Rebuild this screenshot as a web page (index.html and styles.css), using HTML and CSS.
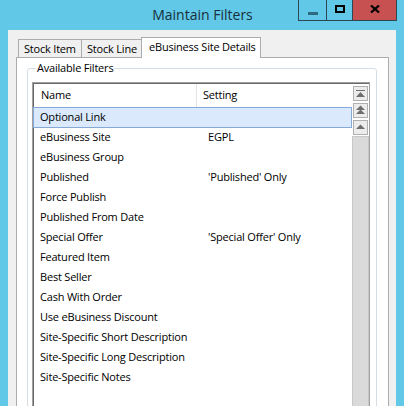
FILE: index.html
```html
<!DOCTYPE html>
<html>
<head>
<meta charset="utf-8">
<link rel="stylesheet" href="styles.css">
</head>
<body>
<div class="window">
  <div class="titlebar">
    <div class="title">Maintain Filters</div>
    <div class="controls">
      <div class="wbtn min"><span class="dash"></span></div>
      <div class="wbtn max"><span class="box"></span></div>
      <div class="wbtn close">
        <svg width="10" height="8" viewBox="0 0 10 8"><path d="M1 0.5 L9 7.5 M9 0.5 L1 7.5" stroke="#000" stroke-width="2.2" fill="none"/></svg>
      </div>
    </div>
  </div>
  <div class="client">
    <div class="tabs">
      <div class="tab t1">Stock Item</div>
      <div class="tab t2">Stock Line</div>
      <div class="tab active">eBusiness Site Details</div>
    </div>
    <div class="panel">
      <fieldset class="group">
        <legend>Available Filters</legend>
        <div class="list">
          <div class="items">
            <div class="header">
              <div class="hcol hname">Name</div>
              <div class="hcol hset">Setting</div>
            </div>
            <div class="row selected"><span>Optional Link</span><span></span></div>
            <div class="row"><span>eBusiness Site</span><span>EGPL</span></div>
            <div class="row"><span>eBusiness Group</span><span></span></div>
            <div class="row"><span>Published</span><span>'Published' Only</span></div>
            <div class="row"><span>Force Publish</span><span></span></div>
            <div class="row"><span>Published From Date</span><span></span></div>
            <div class="row"><span>Special Offer</span><span>'Special Offer' Only</span></div>
            <div class="row"><span>Featured Item</span><span></span></div>
            <div class="row"><span>Best Seller</span><span></span></div>
            <div class="row"><span>Cash With Order</span><span></span></div>
            <div class="row"><span>Use eBusiness Discount</span><span></span></div>
            <div class="row"><span>Site-Specific Short Description</span><span></span></div>
            <div class="row"><span>Site-Specific Long Description</span><span></span></div>
            <div class="row"><span>Site-Specific Notes</span><span></span></div>
          </div>
          <div class="scrollbar">
            <div class="sbtn"><svg width="13" height="13" viewBox="0 0 13 13"><rect x="2" y="3" width="9" height="1" fill="#6e6e6e"/><polygon points="6.5,5 11,10 2,10" fill="#6e6e6e"/></svg></div>
            <div class="sbtn"><svg width="13" height="13" viewBox="0 0 13 13"><polygon points="6.5,1.5 11,6 2,6" fill="#6e6e6e"/><polygon points="6.5,5.5 11,10 2,10" fill="#6e6e6e"/></svg></div>
            <div class="sbtn"><svg width="13" height="13" viewBox="0 0 13 13"><polygon points="6.5,3.5 11,8 2,8" fill="#6e6e6e"/></svg></div>
            <div class="track"></div>
          </div>
        </div>
      </fieldset>
    </div>
  </div>
</div>
</body>
</html>
```
FILE: styles.css
```css
html, body {
  margin: 0;
  padding: 0;
}
body {
  width: 404px;
  height: 406px;
  overflow: hidden;
  background: #62c8e8;
  font-family: "Open Sans", "Noto Sans", sans-serif;
  font-size: 11px;
  letter-spacing: -0.2px;
  color: #000;
}
.window {
  height: 430px;
  display: flex;
  flex-direction: column;
}
.titlebar {
  height: 30px;
  flex: none;
  display: grid;
}
.title {
  grid-area: 1 / 1;
  justify-self: center;
  align-self: center;
  font-size: 14px;
  letter-spacing: 0;
  color: #17303a;
  margin-left: 1px;
  margin-top: -1px;
}
.controls {
  grid-area: 1 / 1;
  justify-self: end;
  align-self: start;
  margin-right: 7px;
  display: flex;
  height: 21px;
}
.wbtn {
  box-sizing: border-box;
  height: 21px;
  border-left: 1px solid #2c4854;
  border-bottom: 1px solid #2c4854;
  display: flex;
  align-items: center;
  justify-content: center;
}
.min { width: 28px; }
.max { width: 26px; }
.close {
  width: 45px;
  background: #c75050;
  border-right: 1px solid #2c4854;
}
.dash {
  width: 10px;
  height: 3px;
  background: #2e6b80;
  margin-top: 6px;
}
.box {
  box-sizing: border-box;
  width: 10px;
  height: 8px;
  border: 2px solid #000;
  margin-top: -2px;
}
.close svg { margin-top: -2px; margin-left: 1px; }
.client {
  flex: 1;
  margin: 0 8px;
  background: #f0f0f0;
  padding: 7px 7px 0 8px;
  display: flex;
  flex-direction: column;
}
.tabs {
  display: flex;
  height: 21px;
  padding-left: 2px;
  margin-bottom: -1px;
  position: relative;
  z-index: 1;
}
.tab {
  box-sizing: border-box;
  height: 18px;
  margin-top: 2px;
  border: 1px solid #acacac;
  border-bottom: none;
  background: #f0f0f0;
  padding-left: 5px;
  line-height: 18px;
  white-space: nowrap;
}
.t1 { width: 64px; }
.t2 { width: 61px; margin-left: -1px; }
.tab.active {
  width: 120px;
  height: 21px;
  margin-top: 0;
  margin-left: -1px;
  background: #fff;
  padding-left: 7px;
  line-height: 17px;
}
.panel {
  flex: 1;
  background: #fff;
  border: 1px solid #acacac;
  padding: 3px 11px 0 10px;
  display: flex;
  flex-direction: column;
}
.group {
  flex: 1;
  margin: 0;
  border: 1px solid #d6dee4;
  border-radius: 3px;
  padding: 0 6px 0 4px;
  display: flex;
  flex-direction: column;
  min-width: 0;
}
.group legend {
  padding: 0 1px;
  margin-left: 4px;
  line-height: 14px;
}
.list {
  flex: 1;
  margin-top: 7px;
  display: flex;
  border-top: 1px solid #a0a0a0;
  border-left: 1px solid #a0a0a0;
  border-right: 1px solid #a0a0a0;
  box-shadow: inset 1px 1px 0 #696969;
  padding: 1px 0 0 1px;
}
.items {
  flex: 1;
  display: flex;
  flex-direction: column;
}
.header {
  height: 23px;
  display: flex;
  flex: none;
}
.hcol {
  line-height: 22px;
}
.hname {
  box-sizing: border-box;
  width: 163px;
  padding-left: 7px;
  border-right: 1px solid #e5e5e5;
}
.hset { padding-left: 6px; }
.row {
  box-sizing: border-box;
  height: 20px;
  display: grid;
  grid-template-columns: 168px 1fr;
  padding-left: 6px;
  line-height: 20px;
  white-space: nowrap;
}
.row.selected {
  background: #dae9fc;
  border: 1px solid #84a9da;
  line-height: 18px;
  height: 21px;
  margin-bottom: -1px;
  margin-left: -1px;
  padding-left: 6px;
}
.scrollbar {
  width: 17px;
  flex: none;
  display: flex;
  flex-direction: column;
  gap: 2px;
  padding-top: 2px;
}
.sbtn {
  box-sizing: border-box;
  width: 15px;
  height: 15px;
  margin-left: 1px;
  border: 1px solid #b0b0b0;
  background: #ececec;
  display: flex;
  align-items: center;
  justify-content: center;
}
.track {
  flex: 1;
  margin-top: -1px;
  background: #dadada;
  border: 1px solid #c8c8c8;
  border-bottom: none;
}
```
